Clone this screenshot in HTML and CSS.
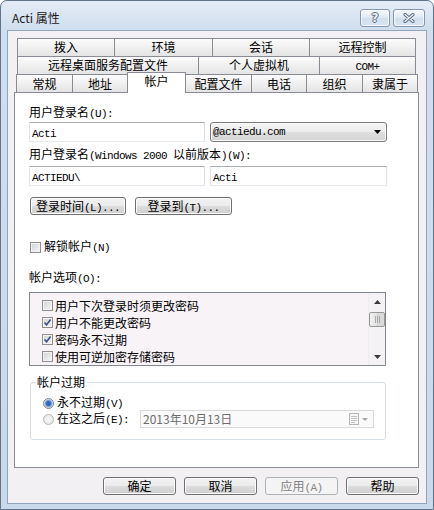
FILE: index.html
```html
<!DOCTYPE html>
<html lang="zh-CN">
<head>
<meta charset="utf-8">
<title>Acti 属性</title>
<link rel="stylesheet" href="styles.css">
</head>
<body>
<div class="win">
  <div class="titlebar">
    <span class="title">Acti 属性</span>
    <div class="tbtns">
      <span class="tb tb-help">?</span>
      <span class="tb tb-close"><svg width="12" height="10" viewBox="0 0 12 10"><path d="M2 1.5L10 8.5M10 1.5L2 8.5" stroke="#56687f" stroke-width="3.2" stroke-linecap="round"/><path d="M2 1.5L10 8.5M10 1.5L2 8.5" stroke="#eef2f7" stroke-width="1.4" stroke-linecap="round"/></svg></span>
    </div>
  </div>
  <div class="client">
    <div class="tabs">
      <div class="trow r1">
        <span class="tab">拨入</span><span class="tab">环境</span><span class="tab">会话</span><span class="tab">远程控制</span>
      </div>
      <div class="trow r2">
        <span class="tab">远程桌面服务配置文件</span><span class="tab">个人虚拟机</span><span class="tab"><span class="m">COM+</span></span>
      </div>
      <div class="trow r3">
        <span class="tab">常规</span><span class="tab">地址</span><span class="tab sel">帐户</span><span class="tab">配置文件</span><span class="tab">电话</span><span class="tab">组织</span><span class="tab">隶属于</span>
      </div>
    </div>
    <div class="panel">
      <div class="lbl lbl1">用户登录名<span class="m">(U):</span></div>
      <div class="frow frow1">
        <div class="inp"><span class="m">Acti</span></div>
        <div class="combo"><span class="m">@actiedu.com</span><svg width="7" height="4" viewBox="0 0 7 4"><path d="M0 0H7L3.5 4Z" fill="#000"/></svg></div>
      </div>
      <div class="lbl lbl2">用户登录名<span class="m">(Windows 2000 </span>以前版本<span class="m">)(W):</span></div>
      <div class="frow frow2">
        <div class="inp"><span class="m">ACTIEDU\</span></div>
        <div class="inp inp2"><span class="m">Acti</span></div>
      </div>
      <div class="brow">
        <span class="btn b1">登录时间<span class="m">(L)...</span></span>
        <span class="btn b2">登录到<span class="m">(T)...</span></span>
      </div>
      <div class="chk">
        <span class="cb"></span><span>解锁帐户<span class="m">(N)</span></span>
      </div>
      <div class="lbl lbl3">帐户选项<span class="m">(O):</span></div>
      <div class="list">
        <div class="items">
          <div class="item"><span class="cb"></span><span>用户下次登录时须更改密码</span></div>
          <div class="item"><span class="cb on"><svg width="9" height="9" viewBox="0 0 9 9"><path d="M1.5 4.5L3.6 6.8L7.6 1.6" fill="none" stroke="#3c4f84" stroke-width="1.6"/></svg></span><span>用户不能更改密码</span></div>
          <div class="item"><span class="cb on"><svg width="9" height="9" viewBox="0 0 9 9"><path d="M1.5 4.5L3.6 6.8L7.6 1.6" fill="none" stroke="#3c4f84" stroke-width="1.6"/></svg></span><span>密码永不过期</span></div>
          <div class="item"><span class="cb"></span><span>使用可逆加密存储密码</span></div>
        </div>
        <div class="sb">
          <div class="sbarrow"><svg width="7" height="4" viewBox="0 0 7 4"><path d="M0 4H7L3.5 0Z" fill="#3a3a3a"/></svg></div>
          <div class="thumb"><i></i><i></i><i></i></div>
          <div class="sbfill"></div>
          <div class="sbarrow"><svg width="7" height="4" viewBox="0 0 7 4"><path d="M0 0H7L3.5 4Z" fill="#3a3a3a"/></svg></div>
        </div>
      </div>
      <fieldset class="grp">
        <legend>帐户过期</legend>
        <div class="rrow rrow1"><span class="rb on"></span><span>永不过期<span class="m">(V)</span></span></div>
        <div class="rrow rrow2">
          <span class="rb off"></span><span>在这之后<span class="m">(E):</span></span>
          <div class="date">
            <span class="dtext">2013年10月13日</span>
            <span class="dicons">
              <svg width="10" height="12" viewBox="0 0 10 12"><rect x="0.5" y="0.5" width="9" height="11" fill="#f6f6f6" stroke="#b4b4b4"/><path d="M2 3.5H8M2 5.5H8M2 7.5H8M2 9.5H6" stroke="#c2c2c2"/></svg>
              <svg width="6" height="3" viewBox="0 0 6 3"><path d="M0 0H6L3 3Z" fill="#a8a8a8"/></svg>
            </span>
          </div>
        </div>
      </fieldset>
    </div>
    <div class="foot">
      <span class="btn fb">确定</span>
      <span class="btn fb">取消</span>
      <span class="btn fb dis">应用<span class="m">(A)</span></span>
      <span class="btn fb">帮助</span>
    </div>
  </div>
</div>
</body>
</html>
```
FILE: styles.css
```css
* { box-sizing: border-box; }
html, body { margin: 0; padding: 0; background: #ffffff; }
body {
  font-family: "Noto Sans CJK SC", "Noto Sans", sans-serif;
  font-size: 12px;
  line-height: 14px;
  color: #000;
}
.m {
  font-family: "Liberation Mono", "DejaVu Sans Mono", monospace;
  font-size: 11px;
  letter-spacing: -0.6px;
}

/* window frame */
.win {
  width: 434px;
  height: 510px;
  border: 1px solid #62748a;
  border-radius: 7px 7px 0 0;
  background: linear-gradient(#e4ecf6, #d0deee 28px, #c9d9ec);
  padding: 0 6px 5px 6px;
  display: flex;
  flex-direction: column;
}
.titlebar {
  height: 29px;
  flex: none;
  display: flex;
  justify-content: space-between;
  align-items: flex-start;
  padding: 0 2px 0 5px;
}
.title {
  margin-top: 10px;
  color: #1a1a1a;
  font-size: 12px;
}
.tbtns {
  margin-top: 8px;
  display: flex;
  gap: 3px;
}
.tb {
  height: 18px;
  border: 1px solid #8597ae;
  border-radius: 3px;
  background: linear-gradient(rgba(255,255,255,0.75), rgba(226,235,246,0.6) 50%, rgba(205,219,236,0.6) 50%, rgba(220,231,244,0.8));
  box-shadow: inset 0 0 0 1px rgba(255,255,255,0.7);
  display: flex;
  align-items: center;
  justify-content: center;
}
.tb-help {
  width: 30px;
  font-family: "DejaVu Sans", sans-serif;
  font-weight: bold;
  font-size: 12px;
  color: #eef2f7;
  text-shadow: 1px 0 #56687f, -1px 0 #56687f, 0 1px #56687f, 0 -1px #56687f;
}
.tb-close { width: 32px; }

/* client area */
.client {
  flex: 1;
  border: 1px solid #8fa4bd;
  background: #f3f0f3;
  display: flex;
  flex-direction: column;
}

/* tabs */
.tabs { margin-top: 7px; }
.trow { display: flex; height: 18px; align-items: flex-start; }
.r1, .r2 { padding-left: 9px; }
.r3 { padding-left: 8px; }
.tab {
  flex: none;
  height: 18px;
  border: 1px solid #898c95;
  border-bottom: 0;
  background: linear-gradient(#fcfcfc, #e4e4e4);
  text-align: center;
  line-height: 14px;
  padding-top: 1px;
  white-space: nowrap;
}
.r3 .tab { padding-top: 2px; }
.tab + .tab { margin-left: -1px; }
.r1 .tab:nth-child(1) { width: 98px; }
.r1 .tab:nth-child(2) { width: 99px; }
.r1 .tab:nth-child(3) { width: 98px; }
.r1 .tab:nth-child(4) { width: 107px; }
.r2 .tab:nth-child(1) { width: 182px; }
.r2 .tab:nth-child(2) { width: 122px; }
.r2 .tab:nth-child(3) { width: 97px; }
.r3 .tab:nth-child(1) { width: 57px; }
.r3 .tab:nth-child(2) { width: 56px; }
.r3 .tab:nth-child(3) { width: 59px; }
.r3 .tab:nth-child(4) { width: 67px; }
.r3 .tab:nth-child(5) { width: 56px; }
.r3 .tab:nth-child(6) { width: 57px; }
.r3 .tab:nth-child(7) { width: 56px; }
.r3 .tab.sel {
  height: 21px;
  margin-top: -2px;
  padding-top: 1px;
  background: #ffffff;
  position: relative;
  z-index: 1;
}

/* panel */
.panel {
  margin-left: 6px;
  width: 405px;
  height: 376px;
  flex: none;
  border: 1px solid #898c95;
  background: #ffffff;
  padding-left: 14px;
}
.lbl { white-space: nowrap; }
.lbl1 { margin-top: 12px; }
.lbl2 { margin-top: 5px; }
.lbl3 { margin-top: 16px; }
.frow { display: flex; gap: 5px; height: 20px; }
.frow1 { margin-top: 1px; }
.frow2 { margin-top: 3px; }
.inp {
  width: 176px;
  height: 20px;
  border: 1px solid;
  border-color: #abadb3 #dbdfe6 #e3e9ef #e2e3ea;
  background: #fff;
  padding-left: 2px;
  line-height: 18px;
}
.inp2 { width: 177px; }
.combo {
  width: 177px;
  height: 20px;
  border: 1px solid #7a7a7a;
  border-radius: 3px;
  background: linear-gradient(#f4f4f4, #ececec 50%, #dfdfdf 50%, #d3d3d3);
  box-shadow: inset 0 0 0 1px #fbfbfb;
  display: flex;
  align-items: center;
  justify-content: space-between;
  padding: 0 5px 0 2px;
}

.btn {
  display: inline-block;
  height: 18px;
  border: 1px solid #707070;
  border-radius: 3px;
  background: linear-gradient(#f3f3f3, #ebebeb 50%, #dddddd 50%, #cfcfcf);
  box-shadow: inset 0 0 0 1px #fcfcfc;
  text-align: center;
  line-height: 16px;
  white-space: nowrap;
}
.brow { display: flex; gap: 9px; margin-top: 11px; padding-left: 1px; }
.b1 { width: 96px; }
.b2 { width: 97px; }

.cb {
  flex: none;
  width: 11px;
  height: 11px;
  border: 1px solid #8f8f8f;
  background: linear-gradient(135deg, #d0d3d8, #f7f7f7);
  box-shadow: inset 0 0 0 1px #f2f2f2;
  display: flex;
  align-items: center;
  justify-content: center;
}
.chk {
  display: flex;
  align-items: center;
  gap: 3px;
  height: 14px;
  margin-top: 25px;
  padding-left: 1px;
}

/* list box */
.list {
  margin-top: 6px;
  width: 357px;
  height: 74px;
  border: 1px solid #828790;
  background: #f8f3f7;
  display: flex;
  overflow: hidden;
}
.items { flex: 1; padding: 4px 0 0 12px; }
.item { height: 17px; display: flex; align-items: center; gap: 2px; }
.sb {
  width: 17px;
  flex: none;
  background: #f5f2f5;
  border-left: 1px solid #f0ecef;
  display: flex;
  flex-direction: column;
}
.sbarrow { height: 17px; display: flex; align-items: center; justify-content: center; }
.thumb {
  margin: 2px 0 0 0;
  height: 15px;
  border: 1px solid #979797;
  border-radius: 2px;
  background: linear-gradient(90deg, #f2f2f2, #e2e2e2 50%, #d6d6d6 50%, #dcdcdc);
  display: flex;
  justify-content: center;
  align-items: center;
  gap: 1px;
}
.thumb i { display: block; width: 1px; height: 7px; background: #a9a9a9; }
.sbfill { flex: 1; }

/* group box */
.grp {
  margin: 9px 0 0 1px;
  width: 356px;
  min-width: 0;
  border: 1px solid #d5dfe5;
  border-radius: 3px;
  padding: 0 0 11px 0;
}
.grp legend {
  margin-left: 5px;
  padding: 0 1px;
  line-height: 14px;
}
.rrow { display: flex; align-items: center; gap: 3px; padding-left: 12px; }
.rrow1 { margin-top: 7px; height: 14px; }
.rrow2 { height: 18px; }
.rb {
  flex: none;
  width: 11px;
  height: 11px;
  border-radius: 50%;
  border: 1px solid #8e8f8f;
  background: radial-gradient(circle at 50% 50%, #ffffff, #d6d9de);
}
.rb.on {
  border-color: #7b8595;
  background: radial-gradient(circle at 50% 50%, #2a63b8 0, #2f6bc0 2px, #8fb2de 3.5px, #e7eef7 4.5px);
}
.rb.off {
  border-color: #b5b5b5;
  background: radial-gradient(circle at 50% 50%, #f8f8f8, #e3e3e3);
}
.date {
  margin-left: auto;
  margin-right: 11px;
  width: 234px;
  height: 18px;
  border: 1px solid #d9d9d9;
  background: #fbfafb;
  display: flex;
  align-items: center;
  justify-content: space-between;
  padding: 0 5px 0 2px;
  color: #6d6d6d;
}
.dicons { display: flex; align-items: center; gap: 3px; }

/* footer buttons */
.foot {
  display: flex;
  justify-content: flex-end;
  gap: 8px;
  margin-top: 9px;
  padding-right: 7px;
}
.fb { width: 73px; }
.btn.dis {
  border-color: #adb2b5;
  background: #f4f4f4;
  box-shadow: none;
  color: #838383;
}
```
